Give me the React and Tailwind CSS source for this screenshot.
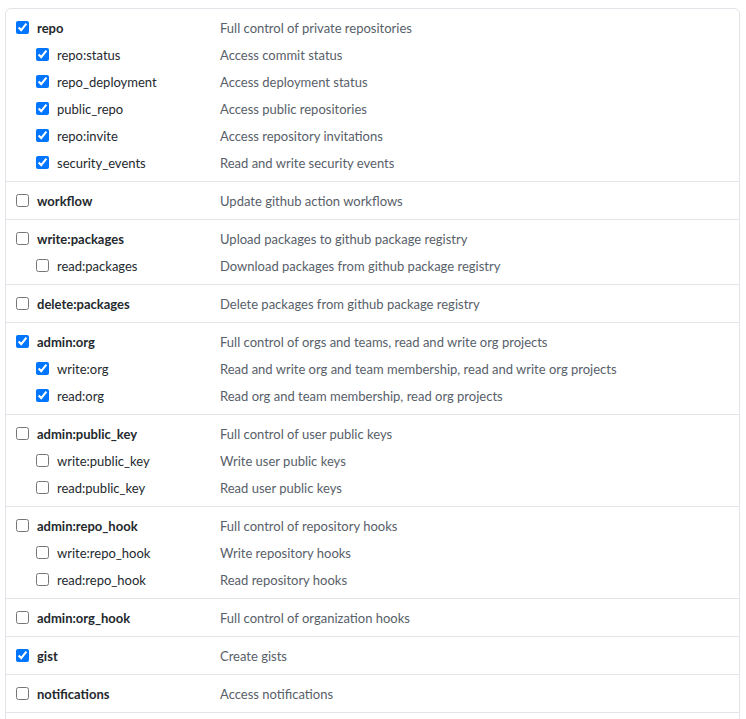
import React from "react";

const sections = [
  [
    { name: "repo", desc: "Full control of private repositories", checked: true },
    { name: "repo:status", desc: "Access commit status", checked: true, child: true },
    { name: "repo_deployment", desc: "Access deployment status", checked: true, child: true },
    { name: "public_repo", desc: "Access public repositories", checked: true, child: true },
    { name: "repo:invite", desc: "Access repository invitations", checked: true, child: true },
    { name: "security_events", desc: "Read and write security events", checked: true, child: true },
  ],
  [{ name: "workflow", desc: "Update github action workflows" }],
  [
    { name: "write:packages", desc: "Upload packages to github package registry" },
    { name: "read:packages", desc: "Download packages from github package registry", child: true },
  ],
  [{ name: "delete:packages", desc: "Delete packages from github package registry" }],
  [
    { name: "admin:org", desc: "Full control of orgs and teams, read and write org projects", checked: true },
    { name: "write:org", desc: "Read and write org and team membership, read and write org projects", checked: true, child: true },
    { name: "read:org", desc: "Read org and team membership, read org projects", checked: true, child: true },
  ],
  [
    { name: "admin:public_key", desc: "Full control of user public keys" },
    { name: "write:public_key", desc: "Write user public keys", child: true },
    { name: "read:public_key", desc: "Read user public keys", child: true },
  ],
  [
    { name: "admin:repo_hook", desc: "Full control of repository hooks" },
    { name: "write:repo_hook", desc: "Write repository hooks", child: true },
    { name: "read:repo_hook", desc: "Read repository hooks", child: true },
  ],
  [{ name: "admin:org_hook", desc: "Full control of organization hooks" }],
  [{ name: "gist", desc: "Create gists", checked: true }],
  [{ name: "notifications", desc: "Access notifications" }],
];

function Row({ item }) {
  return (
    <div className="flex h-[27px] items-center pl-[10px]">
      <div className={"flex w-[204px] shrink-0 items-center " + (item.child ? "pl-[20px]" : "")}>
        <input
          type="checkbox"
          defaultChecked={!!item.checked}
          className="m-0 h-[13px] w-[13px] shrink-0"
        />
        <span
          className={
            "ml-[8px] text-[#24292e] " + (item.child ? "font-normal" : "font-bold")
          }
        >
          {item.name}
        </span>
      </div>
      <span className="text-[#586069]">{item.desc}</span>
    </div>
  );
}

export default function App() {
  return (
    <div
      className="bg-white pl-[5px] pt-[8px] text-[13px] leading-[20px]"
      style={{ fontFamily: "Lato, 'Noto Sans', sans-serif" }}
    >
      <div className="w-[735px] overflow-hidden rounded-[6px] border border-[#e1e4e8] bg-white">
        {sections.map((sec, i) => (
          <div key={i} className="border-b border-[#e1e4e8] py-[5px]">
            {sec.map((item) => (
              <Row key={item.name} item={item} />
            ))}
          </div>
        ))}
        <div className="h-[37px]" />
      </div>
    </div>
  );
}
